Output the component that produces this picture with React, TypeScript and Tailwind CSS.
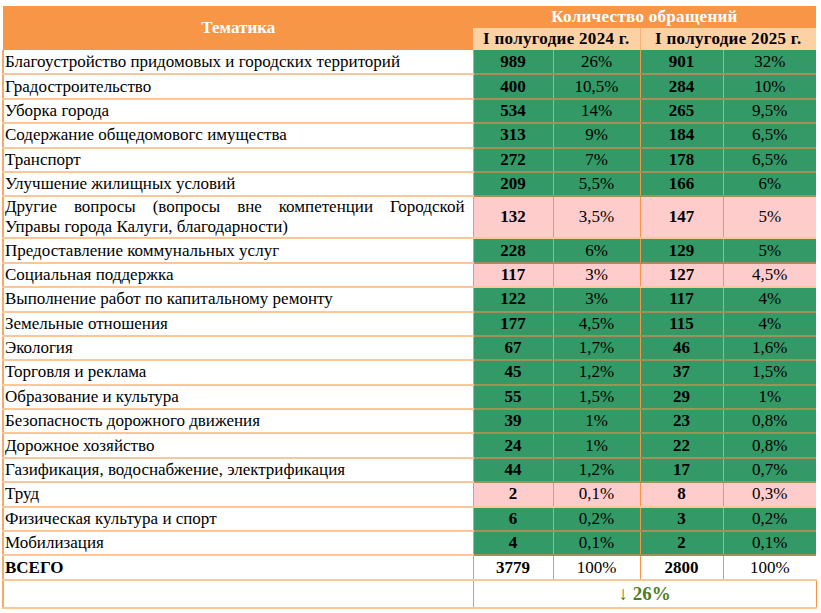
const rows: { name: string; a: string; ap: string; b: string; bp: string; pink?: boolean; tall?: boolean }[] = [
  { name: 'Благоустройство придомовых и городских территорий', a: '989', ap: '26%', b: '901', bp: '32%' },
  { name: 'Градостроительство', a: '400', ap: '10,5%', b: '284', bp: '10%' },
  { name: 'Уборка города', a: '534', ap: '14%', b: '265', bp: '9,5%' },
  { name: 'Содержание общедомовогс имущества', a: '313', ap: '9%', b: '184', bp: '6,5%' },
  { name: 'Транспорт', a: '272', ap: '7%', b: '178', bp: '6,5%' },
  { name: 'Улучшение жилищных условий', a: '209', ap: '5,5%', b: '166', bp: '6%' },
  { name: 'Другие вопросы (вопросы вне компетенции Городской|Управы города Калуги, благодарности)', a: '132', ap: '3,5%', b: '147', bp: '5%', pink: true, tall: true },
  { name: 'Предоставление коммунальных услуг', a: '228', ap: '6%', b: '129', bp: '5%' },
  { name: 'Социальная поддержка', a: '117', ap: '3%', b: '127', bp: '4,5%', pink: true },
  { name: 'Выполнение работ по капитальному ремонту', a: '122', ap: '3%', b: '117', bp: '4%' },
  { name: 'Земельные отношения', a: '177', ap: '4,5%', b: '115', bp: '4%' },
  { name: 'Экология', a: '67', ap: '1,7%', b: '46', bp: '1,6%' },
  { name: 'Торговля и реклама', a: '45', ap: '1,2%', b: '37', bp: '1,5%' },
  { name: 'Образование и культура', a: '55', ap: '1,5%', b: '29', bp: '1%' },
  { name: 'Безопасность дорожного движения', a: '39', ap: '1%', b: '23', bp: '0,8%' },
  { name: 'Дорожное хозяйство', a: '24', ap: '1%', b: '22', bp: '0,8%' },
  { name: 'Газификация, водоснабжение, электрификация', a: '44', ap: '1,2%', b: '17', bp: '0,7%' },
  { name: 'Труд', a: '2', ap: '0,1%', b: '8', bp: '0,3%', pink: true },
  { name: 'Физическая культура и спорт', a: '6', ap: '0,2%', b: '3', bp: '0,2%' },
  { name: 'Мобилизация', a: '4', ap: '0,1%', b: '2', bp: '0,1%' },
];

function Name({ text }: { text: string }) {
  if (!text.includes('|')) return <>{text}</>;
  const [first, second] = text.split('|');
  // first line is justified edge to edge, like in the source document
  return (
    <>
      <span className="block text-justify [text-align-last:justify]">{first}</span>
      <span className="block">{second}</span>
    </>
  );
}

export default function App() {
  return (
    <div className="w-[821px] h-[613px] bg-white pt-[6px] pl-[2px] [font-family:'Liberation_Serif',serif] text-[17px] leading-[20px] text-black">
      <table className="border-collapse table-fixed w-[813px]">
        <colgroup>
          <col className="w-[470px]" />
          <col className="w-[80px]" />
          <col className="w-[87px]" />
          <col className="w-[83px]" />
          <col className="w-[93px]" />
        </colgroup>
        <thead>
          <tr className="h-[22px]">
            <th rowSpan={2} className="bg-[#f79646] text-white font-bold text-center p-0 border-l border-[#f79646]">
              Тематика
            </th>
            <th colSpan={4} className="bg-[#f79646] text-white font-bold text-center p-0 tracking-[0.3px]">
              Количество обращений
            </th>
          </tr>
          <tr className="h-[22px]">
            <th colSpan={2} className="bg-[#fcd1a4] font-bold text-center p-0 tracking-[0.3px] border-r border-[#f8b27a]">I полугодие 2024 г.</th>
            <th colSpan={2} className="bg-[#fcd1a4] font-bold text-center p-0 tracking-[0.3px]">I полугодие 2025 г.</th>
          </tr>
        </thead>
        <tbody>
          {rows.map((r) => {
            const cell = r.pink
              ? 'bg-[#ffcccc] border-b-2 border-b-[#fbc797]'
              : 'bg-[#339966] border-b-2 border-b-[#a39059]';
            return (
              <tr key={r.name} className={r.tall ? 'h-[40px]' : 'h-[24.4px]'}>
                <td className="pl-[1px] pr-[8px] py-0 border-l-2 border-l-[#f9a86a] border-r border-r-[#f79646] border-b-2 border-b-[#fbc797]">
                  <Name text={r.name} />
                </td>
                <td className={`${cell} text-center font-bold p-0 border-r border-r-[#f79646]`}>{r.a}</td>
                <td className={`${cell} text-center p-0 border-r border-r-[#f79646]`}>{r.ap}</td>
                <td className={`${cell} text-center font-bold p-0 border-r border-r-[#f79646]`}>{r.b}</td>
                <td className={`${cell} text-center p-0`}>{r.bp}</td>
              </tr>
            );
          })}
          <tr className="h-[24.4px]">
            <td className="pl-[1px] py-0 font-bold border-l-2 border-l-[#f9a86a] border-r border-r-[#f79646] border-b-2 border-b-[#fbc797]">ВСЕГО</td>
            <td className="text-center font-bold p-0 border-r border-r-[#f79646] border-b-2 border-b-[#fbc797]">3779</td>
            <td className="text-center p-0 border-r border-r-[#f79646] border-b-2 border-b-[#fbc797]">100%</td>
            <td className="text-center font-bold p-0 border-r border-r-[#f79646] border-b-2 border-b-[#fbc797]">2800</td>
            <td className="text-center p-0 border-b-2 border-b-[#fbc797]">100%</td>
          </tr>
          <tr className="h-[28px]">
            <td className="border-l-2 border-l-[#f9a86a] border-r border-r-[#f79646] border-b-2 border-b-[#fbc797]" />
            <td colSpan={4} className="text-center font-bold text-[19px] text-[#4f7d25] p-0 border-r border-r-[#f79646] border-b-2 border-b-[#fbc797]">
              ↓ 26%
            </td>
          </tr>
        </tbody>
      </table>
    </div>
  );
}
